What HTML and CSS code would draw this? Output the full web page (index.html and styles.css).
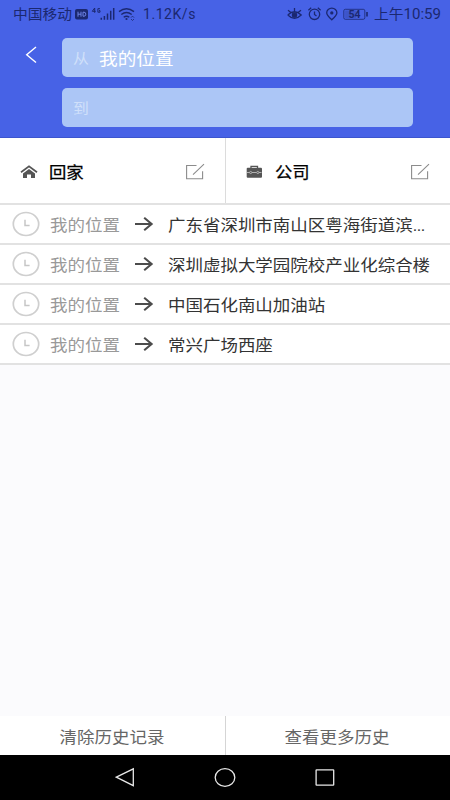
FILE: index.html
```html
<!DOCTYPE html>
<html lang="zh-CN">
<head>
<meta charset="utf-8">
<title>路线</title>
<link rel="stylesheet" href="styles.css">
</head>
<body>
<svg class="defs" width="0" height="0">
  <symbol id="edit" viewBox="0 0 20 18"><path d="M11.5 2.5H1.6v13.3h16V8.2M8 11.6 19 1.2" fill="none" stroke="#8c8c8c" stroke-width="1.1"/></symbol>
  <symbol id="clock" viewBox="0 0 28 26"><ellipse cx="14" cy="13" rx="12.7" ry="11.5" fill="none" stroke="#cfcfcf" stroke-width="1.7"/><path d="M13 8.8v5.8h4.6" fill="none" stroke="#c6c6c6" stroke-width="1.5"/></symbol>
  <symbol id="arrow" viewBox="0 0 20 16"><path d="M1 8h16.5M10.2 1.8 17.6 8l-7.4 6.2" fill="none" stroke="#4c4c4c" stroke-width="2.1"/></symbol>
</svg>
<div class="screen">
  <header class="header">
    <div class="status">
      <span class="carrier"><span class="wide">中国移动</span></span>
      <svg class="signals" width="62" height="16" viewBox="0 0 62 16">
        <rect x="1" y="3" width="13" height="10.5" rx="2" fill="#1b2870"/>
        <path d="M4 5.7v5M7 5.7v5M4 8.2h3M9 6.2v4h1q1.8 0 1.8-2t-1.8-2z" fill="none" stroke="#6f83e6" stroke-width="1"/>
        <path d="M20.7 6.8V2l-2.4 3.3h3.4M26 2.7h-2.1v3.5H26V4.6h-1" fill="none" stroke="#1b2870" stroke-width="1"/>
        <path d="M27.3 11.8v2M30.4 10v3.8M33.5 7.5v6.3M36.7 4.8v9M39.7 2v11.8" stroke="#1b2870" stroke-width="1.5"/>
        <path d="M45 5.6q7.5-5.8 15 0M47.3 8.5q5.2-4 10.4 0M49.7 11.2q2.8-2 5.6 0" fill="none" stroke="#1b2870" stroke-width="1.4"/>
        <circle cx="52.5" cy="13" r="1.1" fill="#1b2870"/><path d="m57 11.6 1.5-1.5 1.5 1.5M57 13l1.5 1.5L60 13" fill="none" stroke="#1b2870" stroke-width=".8"/>
      </svg>
      <span class="speed">1.12K/s</span>
      <svg class="alerts" width="82" height="16" viewBox="0 0 82 16" fill="none" stroke="#1b2870" stroke-width="1.3">
        <path d="M.8 9q6.7-6.5 13.4 0-6.7 6.6-13.4 0M1 4.2l2.6 2M7.5 2v3.5M14 4.2l-2.6 2"/><circle cx="7.5" cy="9" r="2.1" fill="#1b2870"/>
        <circle cx="27.5" cy="8.3" r="5.2"/><path d="M27.5 5.5v3l2 1.5M21.4 4.2l2.8-2.4M33.6 4.2l-2.8-2.4"/>
        <path d="M44.8 13.8C41.6 10.8 39.7 9 39.7 6.9a5.1 4.8 0 0 1 10.2 0c0 2.1-1.9 3.9-5.1 6.9z"/><circle cx="44.8" cy="6.9" r="1" fill="#1b2870"/>
        <rect x="56.8" y="3.3" width="21" height="10" rx="1.5" stroke-width=".8"/><rect x="58.2" y="4.5" width="11" height="7.6" fill="#3448ac" stroke="none" opacity=".5"/><path d="M80 6v4.6" stroke-width="1.6"/>
        <text x="61.5" y="12" class="battery">54</text>
      </svg>
      <span class="time"><span class="wide">上午<span class="digits">10:59</span></span></span>
    </div>
    <div class="route">
      <svg class="back" width="14" height="20" viewBox="0 0 14 20"><path d="M12 2 2.7 9.8l9.3 7.7" fill="none" stroke="#fff" stroke-width="1.4"/></svg>
      <div class="fields">
        <div class="field"><span class="label"><span class="wide">从</span></span><span class="value"><span class="wide">我的位置</span></span></div>
        <div class="field"><span class="label"><span class="wide">到</span></span></div>
      </div>
    </div>
  </header>
  <section class="places">
    <div class="place">
      <svg width="18" height="16" viewBox="0 0 18 16"><path d="m1 8.2 8-5.9 8 5.9" fill="none" stroke="#555" stroke-width="1.7"/><path d="m9 5 6 4.6V14h-4v-3.6H7V14H3V9.6z" fill="#555"/></svg>
      <span class="name"><span class="wide">回家</span></span>
      <svg class="edit" width="20" height="18"><use href="#edit"/></svg>
    </div>
    <div class="place">
      <svg width="18" height="16" viewBox="0 0 18 16"><path d="M6 4.5V2.3h6.5v2.2" fill="none" stroke="#555" stroke-width="1.3"/><rect x="1.7" y="3.8" width="15.3" height="10" rx="1" fill="#555"/><path d="M2 8.5h2.5M7 8.5h4.5M14 8.5h2.5" stroke="#ccc" stroke-width=".8"/><circle cx="5.7" cy="8.5" r="1.1" fill="none" stroke="#ccc" stroke-width=".7"/><circle cx="12.8" cy="8.5" r="1.1" fill="none" stroke="#ccc" stroke-width=".7"/></svg>
      <span class="name"><span class="wide">公司</span></span>
      <svg class="edit" width="20" height="18"><use href="#edit"/></svg>
    </div>
  </section>
  <section class="history">
    <div class="row"><svg width="28" height="26"><use href="#clock"/></svg><span class="from"><span class="wide">我的位置</span></span><svg width="20" height="16"><use href="#arrow"/></svg><span class="to"><span class="wide">广东省深圳市南山区粤海街道滨<span class="dots">...</span></span></span></div>
    <div class="row"><svg width="28" height="26"><use href="#clock"/></svg><span class="from"><span class="wide">我的位置</span></span><svg width="20" height="16"><use href="#arrow"/></svg><span class="to"><span class="wide">深圳虚拟大学园院校产业化综合楼</span></span></div>
    <div class="row"><svg width="28" height="26"><use href="#clock"/></svg><span class="from"><span class="wide">我的位置</span></span><svg width="20" height="16"><use href="#arrow"/></svg><span class="to"><span class="wide">中国石化南山加油站</span></span></div>
    <div class="row"><svg width="28" height="26"><use href="#clock"/></svg><span class="from"><span class="wide">我的位置</span></span><svg width="20" height="16"><use href="#arrow"/></svg><span class="to"><span class="wide">常兴广场西座</span></span></div>
  </section>
  <footer class="actions">
    <div class="action"><span class="wide">清除历史记录</span></div>
    <div class="action"><span class="wide">查看更多历史</span></div>
  </footer>
  <nav class="navbar">
    <svg width="20" height="20" viewBox="0 0 20 20"><path d="M18.3 1.8v16.9L1.3 10.2z"/></svg>
    <svg width="22" height="20" viewBox="0 0 22 20"><ellipse cx="11" cy="10.5" rx="9.8" ry="8.8"/></svg>
    <svg width="20" height="20" viewBox="0 0 20 20"><rect x="1.1" y="2.8" width="17.6" height="15.4" rx=".5"/></svg>
  </nav>
</div>
</body>
</html>
```
FILE: styles.css
```css
* { box-sizing: border-box; }
body { margin: 0; font-family: Roboto, "Noto Sans CJK SC", sans-serif; font-size: 16px; }
svg { display: block; flex: none; }
.defs { position: absolute; }
.screen { width: 450px; height: 800px; display: flex; flex-direction: column; background: #fbfbfd; overflow: hidden; }
.wide { display: inline-block; white-space: nowrap; transform: scaleX(1.092); transform-origin: 0 50%; }

.header { height: 138px; flex: none; background: #4762e6; border-bottom: 1px solid #3c55ce; }
.status { height: 28px; display: flex; align-items: center; padding-left: 13px; color: #1b2870; font-size: 13.5px; line-height: 20px; }
.carrier { width: 61px; }
.speed { width: 144px; margin-left: 7px; font-size: 14px; letter-spacing: .55px; }
.battery { font: bold 10.5px Roboto, sans-serif; fill: #1b2870; stroke: none; }
.time { margin-left: 5px; }
.digits { font-size: 13.8px; }
.route { display: flex; padding: 10px 37px 0 24px; }
.back { margin-top: 7px; }
.fields { flex: 1; margin-left: 24px; display: grid; gap: 11px; }
.field { height: 39px; display: flex; align-items: center; padding-left: 11px; border-radius: 5px; background: #acc6f6; }
.label { width: 26px; color: #d0e0fa; font-size: 14.5px; }
.value { color: #fff; font-size: 17.1px; }

.places { height: 67px; flex: none; display: grid; grid-template-columns: 225px 225px; background: #fff; border-bottom: 2px solid #e2e2e2; }
.place { display: flex; align-items: center; padding: 2px 20px 0; }
.place + .place { border-left: 1px solid #dcdcdc; padding-left: 19px; }
.name { margin-left: 11px; color: #000; font-size: 15.9px; -webkit-text-stroke: .25px #000; }
.place + .place .name { margin-left: 12px; }
.edit { margin-left: auto; }

.history { background: #fff; }
.row { height: 40px; display: flex; align-items: center; padding-left: 12px; border-bottom: 2px solid #e2e2e2; }
.from { width: 84px; margin-left: 10px; color: #999; }
.to { margin-left: 14px; color: #333; }
.from, .to { padding-bottom: 1px; }
.dots { letter-spacing: -.5px; }

.actions { height: 39px; margin-top: auto; flex: none; display: grid; grid-template-columns: 1fr 1fr; background: #fff; }
.action { display: flex; align-items: center; justify-content: center; padding-top: 1px; color: #666; }
.action .wide { transform-origin: 50% 50%; }
.action + .action { border-left: 1px solid #d5d5d5; padding-right: 2px; }
.navbar { height: 45px; flex: none; display: flex; justify-content: center; gap: 79px; padding-top: 12px; background: #000; }
.navbar path, .navbar ellipse, .navbar rect { fill: none; stroke: #e8e8e8; stroke-width: 1.3; }
```
